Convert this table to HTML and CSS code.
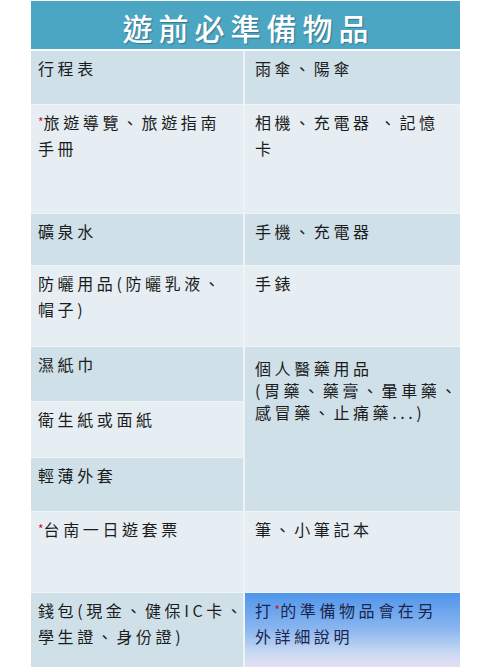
FILE: index.html
```html
<!DOCTYPE html>
<html lang="zh-Hant">
<head>
<meta charset="utf-8">
<title>遊前必準備物品</title>
<link rel="stylesheet" href="styles.css">
</head>
<body>
<div class="sheet">
  <div class="title">遊前必準備物品</div>
  <div class="grid">
    <div class="cell dark">行程表</div>
    <div class="cell dark r">雨傘、陽傘</div>

    <div class="cell light"><span class="star">*</span>旅遊導覽、旅遊指南<br>手冊</div>
    <div class="cell light r">相機、充電器 、記憶<br>卡</div>

    <div class="cell dark">礦泉水</div>
    <div class="cell dark r">手機、充電器</div>

    <div class="cell light">防曬用品(防曬乳液、<br>帽子)</div>
    <div class="cell light r">手錶</div>

    <div class="cell dark">濕紙巾</div>
    <div class="cell dark r med">個人醫藥用品<br>(胃藥、藥膏、暈車藥、<br>感冒藥、止痛藥...)</div>

    <div class="cell light">衛生紙或面紙</div>

    <div class="cell dark">輕薄外套</div>

    <div class="cell light"><span class="star">*</span>台南一日遊套票</div>
    <div class="cell light r">筆、小筆記本</div>

    <div class="cell dark">錢包(現金、健保IC卡、<br>學生證、身份證)</div>
    <div class="cell note r">打<span class="star">*</span>的準備物品會在另<br>外詳細說明</div>
  </div>
</div>
</body>
</html>
```

FILE: styles.css
```css
html, body {
  margin: 0;
  padding: 0;
  background: #ffffff;
}

body {
  width: 500px;
  height: 667px;
  overflow: hidden;
  font-family: "Noto Sans CJK TC", "Noto Sans", sans-serif;
}

.sheet {
  width: 429px;
  margin-left: 31px;
  padding-top: 1px;
}

.title {
  height: 48px;
  box-sizing: border-box;
  padding-top: 5px;
  background: #4ba6c3;
  color: #ffffff;
  font-size: 30px;
  font-weight: 500;
  letter-spacing: 6px;
  text-indent: 6px;
  line-height: 43px;
  text-align: center;
  text-shadow: 1px 1px 1px rgba(20, 60, 80, 0.45);
}

.grid {
  margin-top: 2px;
  display: grid;
  grid-template-columns: 212px 215px;
  grid-template-rows: 53px 108px 51px 80px 54px 55px 53px 80px 80px;
  column-gap: 2px;
  row-gap: 1px;
  background: #eef3f6;
}

.cell {
  padding: 4px 0 0 7px;
  font-size: 16px;
  line-height: 26px;
  letter-spacing: 3.6px;
  color: #1c1c1c;
  white-space: nowrap;
  overflow: visible;
}

.cell.r {
  padding-left: 10px;
}

.dark {
  background: #cfe0e9;
}

.light {
  background: #e6eef3;
}

.med {
  grid-row: span 3;
  padding-top: 10px;
  line-height: 22px;
}

.note {
  background: linear-gradient(to bottom, #4f95ea 0%, #8ab6f0 45%, #c9d9f3 75%, #f1e3f2 100%);
  color: #1a2550;
}

.star {
  color: #d0103a;
  font-size: 12px;
  letter-spacing: 0;
  vertical-align: 2px;
}
```
